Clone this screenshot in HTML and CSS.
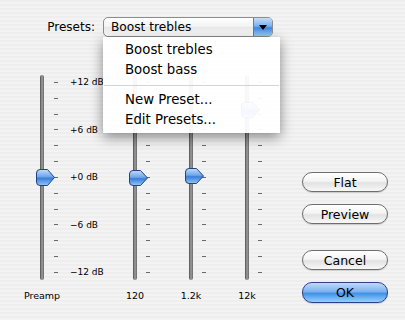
FILE: index.html
```html
<!DOCTYPE html>
<html lang="en">
<head>
    <meta charset="UTF-8">
    <meta name="viewport" content="width=device-width, initial-scale=1.0">
    <title>Equalizer</title>
    <link rel="stylesheet" href="styles.css">
</head>
<body>
    <div class="window">
        <div class="top">
            <label class="presets-label">Presets:</label>
            <div class="popup">
                <span class="popup-text">Boost trebles</span>
                <span class="popup-arrow">
                    <svg width="10" height="7" viewBox="0 0 10 7"><path d="M1 1 H9 L5 6 Z" fill="#000"/></svg>
                </span>
            </div>
        </div>

        <div class="main">
            <!-- preamp -->
            <div class="band preamp">
                <div class="col">
                    <div class="track">
                        <svg class="thumb" style="top:94px" width="19" height="17" viewBox="0 0 19 17">
                            <defs><linearGradient id="t1" x1="0" y1="0" x2="0" y2="1"><stop offset="0" stop-color="#c4dcf8"/><stop offset="0.45" stop-color="#6ea6ea"/><stop offset="0.55" stop-color="#3a7ed8"/><stop offset="1" stop-color="#92c8f8"/></linearGradient></defs>
                            <path d="M4 0.5 H11.5 L18.5 8.5 L11.5 16.5 H4 Q0.5 16.5 0.5 13 V4 Q0.5 0.5 4 0.5 Z" fill="url(#t1)" stroke="#23437f"/>
                        </svg>
                    </div>
                    <span class="name">Preamp</span>
                </div>
                <div class="ticks">
                    <i></i><i></i><i></i><i></i><i></i><i></i><i></i><i></i><i></i><i></i><i></i><i></i><i></i>
                </div>
                <div class="db">
                    <span>+12 dB</span>
                    <span>+6 dB</span>
                    <span>+0 dB</span>
                    <span>&minus;6 dB</span>
                    <span>&minus;12 dB</span>
                </div>
            </div>

            <div class="band first">
                <div class="col">
                    <div class="track">
                        <svg class="thumb" style="top:95px" width="19" height="16" viewBox="0 0 19 16">
                            <defs><linearGradient id="t2" x1="0" y1="0" x2="0" y2="1"><stop offset="0" stop-color="#c4dcf8"/><stop offset="0.45" stop-color="#6ea6ea"/><stop offset="0.55" stop-color="#3a7ed8"/><stop offset="1" stop-color="#92c8f8"/></linearGradient></defs>
                            <path d="M4 0.5 H11.5 L18.5 8 L11.5 15.5 H4 Q0.5 15.5 0.5 12 V4 Q0.5 0.5 4 0.5 Z" fill="url(#t2)" stroke="#23437f"/>
                        </svg>
                    </div>
                    <span class="name">120</span>
                </div>
                <div class="ticks">
                    <i></i><i></i><i></i><i></i><i></i><i></i><i></i><i></i><i></i><i></i><i></i><i></i><i></i>
                </div>
            </div>

            <div class="band">
                <div class="col">
                    <div class="track">
                        <svg class="thumb" style="top:93px" width="19" height="16" viewBox="0 0 19 16">
                            <defs><linearGradient id="t3" x1="0" y1="0" x2="0" y2="1"><stop offset="0" stop-color="#c4dcf8"/><stop offset="0.45" stop-color="#6ea6ea"/><stop offset="0.55" stop-color="#3a7ed8"/><stop offset="1" stop-color="#92c8f8"/></linearGradient></defs>
                            <path d="M4 0.5 H11.5 L18.5 8 L11.5 15.5 H4 Q0.5 15.5 0.5 12 V4 Q0.5 0.5 4 0.5 Z" fill="url(#t3)" stroke="#23437f"/>
                        </svg>
                    </div>
                    <span class="name">1.2k</span>
                </div>
                <div class="ticks">
                    <i></i><i></i><i></i><i></i><i></i><i></i><i></i><i></i><i></i><i></i><i></i><i></i><i></i>
                </div>
            </div>

            <div class="band">
                <div class="col">
                    <div class="track">
                        <svg class="thumb" style="top:27px" width="19" height="16" viewBox="0 0 19 16">
                            <defs><linearGradient id="t4" x1="0" y1="0" x2="0" y2="1"><stop offset="0" stop-color="#c4dcf8"/><stop offset="0.45" stop-color="#6ea6ea"/><stop offset="0.55" stop-color="#3a7ed8"/><stop offset="1" stop-color="#92c8f8"/></linearGradient></defs>
                            <path d="M4 0.5 H11.5 L18.5 8 L11.5 15.5 H4 Q0.5 15.5 0.5 12 V4 Q0.5 0.5 4 0.5 Z" fill="url(#t4)" stroke="#23437f"/>
                        </svg>
                    </div>
                    <span class="name">12k</span>
                </div>
                <div class="ticks">
                    <i></i><i></i><i></i><i></i><i></i><i></i><i></i><i></i><i></i><i></i><i></i><i></i><i></i>
                </div>
            </div>

            <div class="buttons">
                <button class="btn">Flat</button>
                <button class="btn">Preview</button>
                <button class="btn cancel">Cancel</button>
                <button class="btn ok">OK</button>
            </div>
        </div>

        <div class="menu">
            <div class="item">Boost trebles</div>
            <div class="item">Boost bass</div>
            <div class="sep"></div>
            <div class="item">New Preset...</div>
            <div class="item">Edit Presets...</div>
        </div>
    </div>
</body>
</html>
```

FILE: styles.css
```css
body {
    margin: 0;
    font-family: "DejaVu Sans", Verdana, sans-serif;
    color: #000;
}

.window {
    position: relative;
    width: 405px;
    height: 320px;
    overflow: hidden;
    background: repeating-linear-gradient(#eeeeee 0 2px, #f3f3f3 2px 4px);
}

.top {
    display: flex;
    align-items: center;
    padding: 17px 0 0 47px;
}

.presets-label {
    width: 48px;
    margin-right: 8px;
    font-size: 12px;
    text-align: right;
}

.popup {
    display: flex;
    width: 170px;
    height: 20px;
    box-sizing: border-box;
    border: 1px solid #8c8c8c;
    border-radius: 5px;
    overflow: hidden;
    background: linear-gradient(#ffffff, #f2f2f2 50%, #e8e8e8 51%, #ffffff);
}

.popup-text {
    flex: 1;
    padding-left: 7px;
    font-size: 12.2px;
    line-height: 18px;
}

.popup-arrow {
    width: 18px;
    display: flex;
    align-items: center;
    justify-content: center;
    border-left: 1px solid #5a7fb8;
    background: linear-gradient(#c6def8, #79b0ee 45%, #3f86de 55%, #9fd0fb);
}

.main {
    display: flex;
    padding-left: 40px;
    margin-top: 38px;
}

.band {
    display: flex;
    align-items: flex-start;
}

.band + .band {
    margin-left: 39px;
}

.band.first {
    margin-left: 29px;
}

.col {
    width: 4px;
    display: flex;
    flex-direction: column;
    align-items: center;
}

.track {
    position: relative;
    width: 4px;
    height: 205px;
    border-radius: 2px;
    background: linear-gradient(to right, #4c4c4c, #a0a0a0 50%, #666666);
}

.thumb {
    position: absolute;
    left: -4px;
}

.name {
    margin-top: 10px;
    font-size: 9.5px;
    line-height: 12px;
    white-space: nowrap;
}

.ticks {
    margin: 7px 0 0 10px;
    width: 4px;
    height: 191px;
    display: flex;
    flex-direction: column;
    justify-content: space-between;
}

.band.first .ticks,
.band + .band .ticks {
    margin-left: 9px;
}

.ticks i {
    display: block;
    height: 1px;
    background: #6a6a6a;
}

.db {
    margin: 1px 0 0 12px;
    width: 34px;
    height: 202px;
    display: flex;
    flex-direction: column;
    justify-content: space-between;
    font-size: 9px;
    line-height: 12px;
    white-space: nowrap;
}

.buttons {
    display: flex;
    flex-direction: column;
    gap: 12px;
    margin: 97px 0 0 auto;
    padding-right: 17px;
}

.btn {
    width: 86px;
    height: 20px;
    padding: 0;
    border: 1px solid #6e6e6e;
    border-radius: 10px;
    font-family: "DejaVu Sans", Verdana, sans-serif;
    font-size: 12.5px;
    color: #000;
    background: linear-gradient(#ffffff, #f4f4f4 45%, #e2e2e2 55%, #f8f8f8);
    box-shadow: 0 1px 1px rgba(0, 0, 0, 0.15);
}

.btn.cancel {
    margin-top: 14px;
}

.btn.ok {
    height: 21px;
    border-color: #2f3f8c;
    background: linear-gradient(#c0dbf9, #7cb2ee 45%, #4290e8 55%, #94d2fd);
}

.menu {
    position: absolute;
    left: 103px;
    top: 37px;
    width: 177px;
    padding: 3px 0;
    background: rgba(255, 255, 255, 0.94);
    box-shadow: 0 4px 12px rgba(0, 0, 0, 0.45);
}

.item {
    height: 20px;
    line-height: 20px;
    padding-left: 22px;
    font-size: 13.3px;
}

.sep {
    height: 1px;
    margin: 5px 1px 4px;
    background: #d4d4d4;
}
```
